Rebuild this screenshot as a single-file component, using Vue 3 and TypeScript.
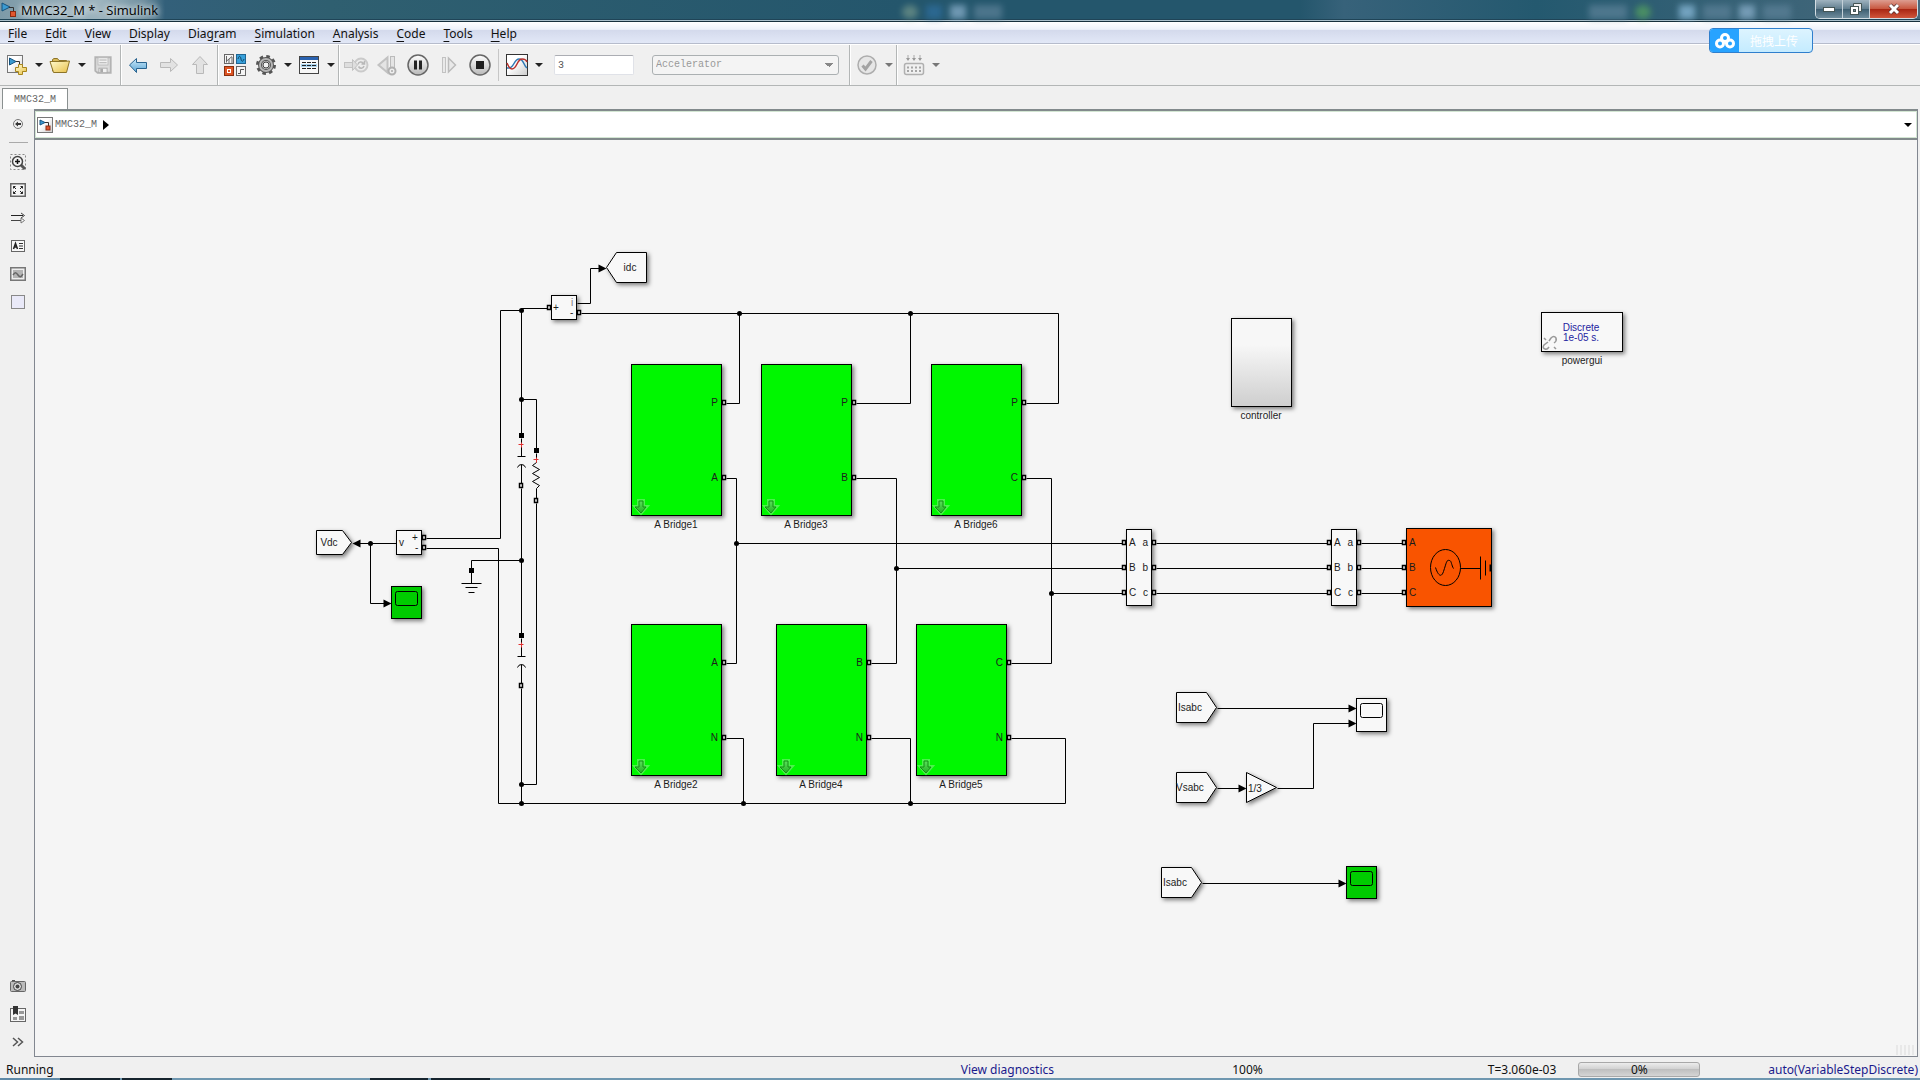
<script setup lang="ts">
interface MenuItem { pre: string; key: string; post: string }
interface Port { x: number; y: number }
interface Label { x: number; y: number; text: string; anchor?: 'start' | 'middle' | 'end' }
interface Bridge { x: number; y: number; name: string; top: string; bottom: string }
interface Tag { points: string; label: Label }
interface Scope { x: number; y: number; h: number; running: boolean }

const menus: MenuItem[] = [
  { pre: '', key: 'F', post: 'ile' },
  { pre: '', key: 'E', post: 'dit' },
  { pre: '', key: 'V', post: 'iew' },
  { pre: '', key: 'D', post: 'isplay' },
  { pre: 'Diag', key: 'r', post: 'am' },
  { pre: '', key: 'S', post: 'imulation' },
  { pre: '', key: 'A', post: 'nalysis' },
  { pre: '', key: 'C', post: 'ode' },
  { pre: '', key: 'T', post: 'ools' },
  { pre: '', key: 'H', post: 'elp' },
]

const palette = [
  { id: 'zoom', name: 'Zoom' },
  { id: 'fit', name: 'Fit to view' },
  { id: 'signals', name: 'Sample time' },
  { id: 'note', name: 'Annotation' },
  { id: 'image', name: 'Image' },
  { id: 'area', name: 'Area' },
]
const paletteBottom = [
  { id: 'camera', name: 'Screenshot' },
  { id: 'browser', name: 'Model browser' },
  { id: 'more', name: 'More' },
]

const bridges: Bridge[] = [
  { x: 631, y: 364, name: 'A Bridge1', top: 'P', bottom: 'A' },
  { x: 761, y: 364, name: 'A Bridge3', top: 'P', bottom: 'B' },
  { x: 931, y: 364, name: 'A Bridge6', top: 'P', bottom: 'C' },
  { x: 631, y: 624, name: 'A Bridge2', top: 'A', bottom: 'N' },
  { x: 776, y: 624, name: 'A Bridge4', top: 'B', bottom: 'N' },
  { x: 916, y: 624, name: 'A Bridge5', top: 'C', bottom: 'N' },
]

const wires: string[] = [
  'M426 538H500V310H521', 'M521 308H547', 'M521 308V433', 'M521 399H536V448',
  'M577 303H590V268H600', 'M581 313H1058V403H1026',
  'M739 313V403H726', 'M910 313V403H856',
  'M726 478H736V663H726', 'M856 478H896V663H871', 'M1026 478H1051V663H1011',
  'M736 543H1122', 'M896 568H1122', 'M1051 593H1122',
  'M1156 543H1327', 'M1156 568H1327', 'M1156 593H1327',
  'M1361 543H1402', 'M1361 568H1402', 'M1361 593H1402',
  'M426 548H498V803H1065V738H1011', 'M726 738H743V803', 'M871 738H910V803',
  'M521 488V633', 'M521 688V803', 'M536 503V784H521',
  'M521 560H471V583', 'M461 583H481', 'M465 587H477', 'M468 592H474',
  'M396 543H358', 'M370 543V603H384',
  'M1217 708H1349', 'M1217 788H1239', 'M1277 788H1313V723H1349', 'M1202 883H1339',
]

const dots: Port[] = [
  { x: 521, y: 310 }, { x: 521, y: 399 }, { x: 739, y: 313 }, { x: 910, y: 313 },
  { x: 736, y: 543 }, { x: 896, y: 568 }, { x: 1051, y: 593 }, { x: 370, y: 543 },
  { x: 521, y: 560 }, { x: 521, y: 784 }, { x: 521, y: 803 }, { x: 743, y: 803 }, { x: 910, y: 803 },
]

const arrows = [
  { x: 606, y: 268, left: false }, { x: 391, y: 603, left: false }, { x: 352, y: 543, left: true },
  { x: 1356, y: 708, left: false }, { x: 1356, y: 723, left: false },
  { x: 1246, y: 788, left: false }, { x: 1346, y: 883, left: false },
]

const tags: Tag[] = [
  { points: '606,267 616,252 646,252 646,282 616,282', label: { x: 630, y: 271, text: 'idc', anchor: 'middle' } },
  { points: '316,530 342,530 351,542 342,554 316,554', label: { x: 329, y: 546, text: 'Vdc', anchor: 'middle' } },
  { points: '1176,692 1206,692 1216,707 1206,722 1176,722', label: { x: 1178, y: 711, text: 'Isabc' } },
  { points: '1176,772 1206,772 1216,787 1206,802 1176,802', label: { x: 1176, y: 791, text: 'Vsabc' } },
  { points: '1161,867 1191,867 1201,882 1191,897 1161,897', label: { x: 1163, y: 886, text: 'Isabc' } },
]

const scopes: Scope[] = [
  { x: 391, y: 586, h: 32, running: true },
  { x: 1356, y: 698, h: 33, running: false },
  { x: 1346, y: 866, h: 32, running: true },
]

const phases = [{ y: 542, up: 'A', low: 'a' }, { y: 567, up: 'B', low: 'b' }, { y: 592, up: 'C', low: 'c' }]
const meters: number[] = [1126, 1331]
const capacitors: number[] = [435, 635]

const hollowPorts: Port[] = [
  { x: 549, y: 307 }, { x: 579, y: 312 }, { x: 424, y: 537 }, { x: 424, y: 547 },
  { x: 521, y: 485 }, { x: 521, y: 685 }, { x: 536, y: 500 },
  ...bridges.flatMap(b => [{ x: b.x + 93, y: b.y + 38 }, { x: b.x + 93, y: b.y + 113 }]),
  ...meters.flatMap(x => phases.flatMap(p => [{ x: x - 2, y: p.y }, { x: x + 28, y: p.y }])),
  ...phases.map(p => ({ x: 1404, y: p.y })),
]
const solidPorts: Port[] = [{ x: 521, y: 435 }, { x: 536, y: 450 }, { x: 521, y: 635 }, { x: 471, y: 570 }]
</script>

<template>
  <svg class="sprite" aria-hidden="true">
    <defs>
      <linearGradient id="gBlue" x1="0" y1="0" x2="0" y2="1"><stop offset="0" stop-color="#cdeafa" /><stop offset="1" stop-color="#5ba6d6" /></linearGradient>
      <linearGradient id="gGrey" x1="0" y1="0" x2="0" y2="1"><stop offset="0" stop-color="#ffffff" /><stop offset="1" stop-color="#b8b8b8" /></linearGradient>
      <linearGradient id="gPage" x1="0" y1="0" x2="1" y2="1"><stop offset="0.4" stop-color="#ffffff" /><stop offset="1" stop-color="#cccccc" /></linearGradient>
      <linearGradient id="gYellow" x1="0" y1="0" x2="1" y2="1"><stop offset="0" stop-color="#fffbd0" /><stop offset="1" stop-color="#e8c048" /></linearGradient>
      <linearGradient id="gCtl" x1="0" y1="0" x2="0" y2="1"><stop offset="0.3" stop-color="#f7f7f7" /><stop offset="1" stop-color="#cecece" /></linearGradient>
      <linearGradient id="gArrow" x1="0" y1="0" x2="0" y2="1"><stop offset="0" stop-color="#5be05b" /><stop offset="1" stop-color="#22b422" /></linearGradient>
    </defs>
    <symbol id="i-model" viewBox="0 0 16 16">
      <path d="M1 1L9 5L1 9Z" fill="#3b9bd2" stroke="#15527d" />
      <path d="M8 5.500H12.500V9" fill="none" stroke="#333" />
      <rect x="9.500" y="9.500" width="5" height="5" fill="#e0562f" stroke="#8b2a10" />
    </symbol>
    <symbol id="i-modelpage" viewBox="0 0 16 16">
      <rect x=".5" y=".5" width="15" height="15" fill="url(#gPage)" stroke="#777" />
      <path class="tri" d="M3 3L8 5.500L3 8Z" fill="#3b9bd2" stroke="#15527d" />
      <path d="M8 5.500H11.500V9" fill="none" stroke="#333" />
      <rect x="9" y="9" width="4" height="4" fill="#e0562f" stroke="#8b2a10" />
    </symbol>
    <symbol id="i-new" viewBox="0 0 22 22">
      <rect x="1.500" y="1.500" width="15" height="17" fill="url(#gPage)" stroke="#777" />
      <path d="M3.500 4L10 7.500L3.500 11Z" fill="#3b9bd2" stroke="#15527d" /><path d="M10 7.500H13.500V12" fill="none" stroke="#333" />
      <path d="M12.500 10.500H16.500V13.500H20.500V17.500H16.500V20.500H12.500V17.500H9.500V13.500H12.500Z" fill="url(#gYellow)" stroke="#a8861c" />
    </symbol>
    <symbol id="i-open" viewBox="0 0 22 22">
      <path d="M3.500 17V5.500L5 4.500H8.500L10 6.500H17.500V17Z" fill="#d8b958" stroke="#8d7428" />
      <path d="M1 7.500H14L20.500 7L17.500 18.500H4.500Z" fill="url(#gYellow)" stroke="#8d7428" />
    </symbol>
    <symbol id="i-save" viewBox="0 0 22 22">
      <path d="M2.500 2.500H19.500V19.500H5L2.500 17.500Z" fill="#dcdcdc" stroke="#b3b3b3" stroke-width="2" />
      <rect x="5.500" y="3" width="11" height="8" fill="#f1f1f1" stroke="#b9b9b9" /><path d="M7 5.500H15M7 8.500H15" stroke="#aaa" />
      <rect x="6.500" y="14.500" width="9" height="5" fill="#f1f1f1" stroke="#aaa" /><rect x="8" y="15" width="3" height="4" fill="#aaa" />
    </symbol>
    <symbol id="i-left" viewBox="0 0 22 22"><path d="M2.500 11L9.500 4.500V8.500H19.500V14.500H9.500V18.500Z" fill="url(#gBlue)" stroke="#29638f" stroke-linejoin="round" /></symbol>
    <symbol id="i-right" viewBox="0 0 22 22"><path d="M19.500 11L12.500 4.500V8.500H2.500V13.500H12.500V17.500Z" fill="#e2e2e2" stroke="#b9b9b9" stroke-linejoin="round" /></symbol>
    <symbol id="i-up" viewBox="0 0 22 22"><path d="M11 2.500L18.500 10.500H14.500V19.500H7.500V10.500H3.500Z" fill="#e2e2e2" stroke="#b9b9b9" stroke-linejoin="round" /></symbol>
    <symbol id="i-lib" viewBox="0 0 22 22">
      <rect x=".5" y=".5" width="9" height="9" fill="#f4f4f4" stroke="#666" /><path d="M2.500 2V8.500M2 7.500L8 2.500M5 5V9M8 3V9" stroke="#666" fill="none" />
      <rect x="12.500" y=".5" width="9" height="9" fill="#38a0da" stroke="#1f6592" /><path d="M14 5C15 1 16.500 2 17 5S19 8 20 5" stroke="#114766" fill="none" />
      <rect x=".5" y="12.500" width="9" height="9" fill="#dd5423" stroke="#8a2f0e" /><rect x="3.500" y="15.500" width="3" height="3" fill="none" stroke="#fff" />
      <rect x="12.500" y="12.500" width="9" height="9" fill="#f4f4f4" stroke="#666" /><path d="M14 19.500H16.500V15.500H20" stroke="#555" fill="none" />
    </symbol>
    <symbol id="i-gear" viewBox="0 0 22 22">
      <circle cx="11" cy="11" r="8.500" fill="none" stroke="#555" stroke-width="3" stroke-dasharray="3.500 3.180" />
      <circle cx="11" cy="11" r="6" fill="#c9c9c9" stroke="#555" stroke-width="4" /><circle cx="11" cy="11" r="6" fill="none" stroke="#b5b5b5" stroke-width="2" />
      <circle cx="11" cy="11" r="3" fill="#f2f2f2" stroke="#444" />
    </symbol>
    <symbol id="i-explorer" viewBox="0 0 22 22">
      <rect x="1.500" y="2.500" width="19" height="17" fill="#f7f7f7" stroke="#444" /><rect x="2" y="3" width="18" height="3" fill="#2a62b0" />
      <rect x="3" y="10" width="16" height="3" fill="#a8d4f0" />
      <path d="M4 8.500H8M9 8.500H13M14 8.500H18M4 11.500H8M9 11.500H13M14 11.500H18M4 14.500H8M9 14.500H13M14 14.500H18" stroke="#222" />
    </symbol>
    <symbol id="i-update" viewBox="0 0 26 22">
      <rect x="1.500" y="8.500" width="8" height="5" fill="#dedede" stroke="#c2c2c2" /><circle cx="18" cy="11" r="6.500" fill="#ececec" stroke="#cacaca" stroke-width="2" />
      <path d="M9.500 5.500L14.500 11L9.500 16.500Z" fill="#dedede" stroke="#c2c2c2" />
      <path d="M15 10.500C15.500 7.500 19 7 20.500 9.500M21.500 7V10H18.500M21 12C20 15 17 15 15.500 12.500" fill="none" stroke="#b8b8b8" stroke-width="1.500" />
    </symbol>
    <symbol id="i-back" viewBox="0 0 22 22">
      <path d="M11.500 3.500V18.500L2.500 11Z" fill="#e4e4e4" stroke="#c2c2c2" stroke-width="2" /><rect x="14.500" y="2.500" width="4" height="12" fill="#e4e4e4" stroke="#bbb" />
      <circle cx="16" cy="17" r="3.500" fill="#eee" stroke="#b0b0b0" stroke-width="2" /><circle cx="16" cy="17" r="1" fill="#aaa" />
    </symbol>
    <symbol id="i-pause" viewBox="0 0 22 22"><circle cx="11" cy="11" r="10" fill="url(#gGrey)" stroke="#666" stroke-width="1.500" /><path d="M8.500 6.500V15.500M13.500 6.500V15.500" stroke="#222" stroke-width="3" /></symbol>
    <symbol id="i-step" viewBox="0 0 22 22"><rect x="4.500" y="3.500" width="3" height="15" fill="#e9e9e9" stroke="#c2c2c2" /><path d="M10.500 4V18L17.500 11Z" fill="#e9e9e9" stroke="#bbb" stroke-width="1.500" /></symbol>
    <symbol id="i-stop" viewBox="0 0 22 22"><circle cx="11" cy="11" r="10" fill="url(#gGrey)" stroke="#666" stroke-width="1.500" /><rect x="7" y="7" width="8" height="8" fill="#1e1e1e" /></symbol>
    <symbol id="i-scope" viewBox="0 0 22 22">
      <rect x=".5" y=".5" width="21" height="21" fill="url(#gPage)" stroke="#333" />
      <path d="M1 14H3C8 14 8 5 13 5C18 5 17 11 21 14" fill="none" stroke="#2d77b4" stroke-width="1.500" /><path d="M1 9C3 14 4 15 6 15C11 15 11 5 16 5C18 5 20 5 21 8" fill="none" stroke="#b8302c" stroke-width="1.500" />
    </symbol>
    <symbol id="i-check" viewBox="0 0 22 22"><circle cx="11" cy="11" r="9" fill="#e6e6e6" stroke="#adadad" stroke-width="1.500" /><path d="M6.500 11.500L9.500 15L15.500 7" fill="none" stroke="#a3a3a3" stroke-width="3" /></symbol>
    <symbol id="i-build" viewBox="0 0 22 22">
      <path d="M5 1V6M11 1V6M17 1V6" stroke="#aaa" /><path d="M3 4H7L5 7ZM9 4H13L11 7ZM15 4H19L17 7Z" fill="#999" />
      <rect x="1.500" y="9.500" width="19" height="11" rx="2" fill="#f0f0f0" stroke="#b0b0b0" stroke-width="1.500" /><path d="M4 13.500H18M4 17H18" stroke="#a5a5a5" stroke-width="2" stroke-dasharray="2 2" />
    </symbol>
    <symbol id="i-hide" viewBox="0 0 18 18"><circle cx="9" cy="9" r="4.500" fill="none" stroke="#777" /><path d="M6 9L9 6.500V8H12V10H9V11.500Z" fill="#333" /></symbol>
    <symbol id="i-zoom" viewBox="0 0 18 18">
      <rect x="1.500" y="1.500" width="15" height="15" fill="none" stroke="#888" stroke-dasharray="2 2" />
      <path d="M12 12L16 16" stroke="#555" stroke-width="3" /><circle cx="8.500" cy="8.500" r="5" fill="#f4f4f4" stroke="#444" stroke-width="1.500" /><path d="M6 8.500H11M8.500 6V11" stroke="#111" stroke-width="1.500" />
    </symbol>
    <symbol id="i-fit" viewBox="0 0 18 18">
      <rect x="1.750" y="2.750" width="14.500" height="12.500" fill="#f5f5f5" stroke="#666" stroke-width="1.500" />
      <path d="M4.500 7.500V5.500H6.500M4.500 5.500L7 8M11.500 5.500H13.500V7.500M13.500 5.500L11 8M4.500 10.500V12.500H6.500M4.500 12.500L7 10M13.500 10.500V12.500H11.500M13.500 12.500L11 10" fill="none" stroke="#222" />
    </symbol>
    <symbol id="i-signals" viewBox="0 0 18 18"><path d="M2 6.500H14" stroke="#222" /><path d="M12 4L15.500 6.500L12 9M2 11.500H12" fill="none" stroke="#444" /><path d="M12 9L15.500 11.500L12 14Z" fill="#fff" stroke="#777" /></symbol>
    <symbol id="i-note" viewBox="0 0 18 18"><rect x="2.500" y="3.500" width="13" height="11" fill="#f8f8f8" stroke="#666" /><path d="M4.500 12L6.500 6.500L8.500 12M5 10H8" fill="none" stroke="#222" stroke-width="1.500" /><path d="M10 6.500H14M10 9H14M10 11.500H14" stroke="#333" /></symbol>
    <symbol id="i-image" viewBox="0 0 18 18"><rect x="1.750" y="2.750" width="14.500" height="12.500" fill="#eee" stroke="#777" stroke-width="1.500" /><rect x="4" y="5" width="10" height="8" fill="#b4b4b4" /><path d="M4 10C6 7 7 7 9 10S12 12 14 9" fill="none" stroke="#666" stroke-width="1.500" /></symbol>
    <symbol id="i-area" viewBox="0 0 18 18"><rect x="2.500" y="2.500" width="13" height="13" fill="#e9e9f8" stroke="#888" /></symbol>
    <symbol id="i-camera" viewBox="0 0 18 18"><path d="M3 3.500H6" stroke="#555" /><rect x="1.500" y="4.500" width="15" height="10" rx="1" fill="#bbb" stroke="#666" /><circle cx="8.500" cy="9.500" r="4" fill="#ddd" stroke="#444" /><circle cx="8.500" cy="9.500" r="2" fill="#444" /></symbol>
    <symbol id="i-browser" viewBox="0 0 18 18"><rect x="1.500" y="3.500" width="15" height="13" fill="#f5f5f5" stroke="#666" /><path d="M10 6H15V9H10ZM10 11H15V15H10ZM4 12H8V15H4Z" fill="#999" /><path d="M4 1H9V10L6.500 8.500L4 10Z" fill="#333" /></symbol>
    <symbol id="i-more" viewBox="0 0 18 18"><path d="M4 5L8.500 9L4 13M9 5L13.500 9L9 13" fill="none" stroke="#555" stroke-width="1.500" /></symbol>
  </svg>

  <div class="window">
    <header class="titlebar">
      <svg class="logo" width="16" height="18"><use href="#i-model" width="16" height="18" /></svg>
      <h1>MMC32_M * - Simulink</h1>
      <span class="ghosts ghosts-mid" aria-hidden="true"><i class="g-orb"></i><i class="g-blue"></i><i class="g-tile"></i><i class="g-text"></i></span>
      <span class="ghosts ghosts-end" aria-hidden="true"><i class="g-text wide"></i><i class="g-green"></i><i class="g-shirt"></i><i class="g-text"></i><i class="g-tile"></i><i class="g-text"></i></span>
      <div class="winbtns">
        <button type="button" class="min" aria-label="Minimize"><svg width="14" height="10"><rect x="1.500" y="3.500" width="11" height="4" fill="#fff" stroke="#455" /></svg></button>
        <button type="button" class="max" aria-label="Restore"><svg width="14" height="14"><path d="M4.500 1.500H12.500V9.500H4.500Z" fill="#eee" stroke="#455" /><rect x="1.500" y="4.500" width="8" height="8" fill="#fff" stroke="#455" /><rect x="4.500" y="7.500" width="2" height="2" fill="#789" stroke="#455" /></svg></button>
        <button type="button" class="close" aria-label="Close"><svg width="14" height="12"><path d="M3 2L11 10M11 2L3 10" stroke="#533" stroke-width="4.500" /><path d="M3 2L11 10M11 2L3 10" stroke="#fff" stroke-width="3" /></svg></button>
      </div>
    </header>

    <nav class="menubar" aria-label="Main menu">
      <button v-for="m in menus" :key="m.pre + m.key + m.post" type="button">{{ m.pre }}<u>{{ m.key }}</u>{{ m.post }}</button>
    </nav>

    <div class="toolbar" role="toolbar" aria-label="Model tools">
      <div class="group">
        <button type="button" class="icon" aria-label="New"><svg width="22" height="22"><use href="#i-new" /></svg></button>
        <button type="button" class="caret" aria-label="New options"></button>
        <button type="button" class="icon" aria-label="Open"><svg width="22" height="22"><use href="#i-open" /></svg></button>
        <button type="button" class="caret" aria-label="Open options"></button>
        <button type="button" class="icon" aria-label="Save"><svg width="20" height="20"><use href="#i-save" /></svg></button>
      </div>
      <div class="group">
        <button type="button" class="icon" aria-label="Back"><svg width="22" height="22"><use href="#i-left" /></svg></button>
        <button type="button" class="icon" aria-label="Forward"><svg width="22" height="22"><use href="#i-right" /></svg></button>
        <button type="button" class="icon" aria-label="Up"><svg width="22" height="22"><use href="#i-up" /></svg></button>
      </div>
      <div class="group flush">
        <button type="button" class="icon" aria-label="Library"><svg width="22" height="22"><use href="#i-lib" /></svg></button>
        <button type="button" class="icon" aria-label="Configuration"><svg width="22" height="22"><use href="#i-gear" /></svg></button>
        <button type="button" class="caret" aria-label="Configuration options"></button>
        <button type="button" class="icon" aria-label="Explorer"><svg width="22" height="22"><use href="#i-explorer" /></svg></button>
        <button type="button" class="caret" aria-label="Explorer options"></button>
      </div>
      <div class="group run">
        <button type="button" class="icon" aria-label="Update"><svg width="26" height="22"><use href="#i-update" /></svg></button>
        <button type="button" class="icon" aria-label="Step back"><svg width="22" height="22"><use href="#i-back" /></svg></button>
        <button type="button" class="icon" aria-label="Pause"><svg width="22" height="22"><use href="#i-pause" /></svg></button>
        <button type="button" class="icon" aria-label="Step forward"><svg width="22" height="22"><use href="#i-step" /></svg></button>
        <button type="button" class="icon" aria-label="Stop"><svg width="22" height="22"><use href="#i-stop" /></svg></button>
        <span class="rule"></span>
        <button type="button" class="icon" aria-label="Data inspector"><svg width="22" height="22"><use href="#i-scope" /></svg></button>
        <button type="button" class="caret" aria-label="Inspector options"></button>
        <input class="stoptime" type="text" value="3" aria-label="Stop time">
        <select class="mode" aria-label="Simulation mode" disabled><option>Accelerator</option></select>
      </div>
      <div class="group flush">
        <button type="button" class="icon" aria-label="Advisor"><svg width="22" height="22"><use href="#i-check" /></svg></button>
        <button type="button" class="caret dim" aria-label="Advisor options"></button>
      </div>
      <div class="group last">
        <button type="button" class="icon" aria-label="Build"><svg width="22" height="22"><use href="#i-build" /></svg></button>
        <button type="button" class="caret dim" aria-label="Build options"></button>
      </div>
    </div>

    <div class="tabs"><button type="button" class="tab">MMC32_M</button></div>

    <div class="body">
      <aside class="palette">
        <button type="button" aria-label="Hide"><svg width="18" height="18"><use href="#i-hide" /></svg></button>
        <hr>
        <button v-for="p in palette" :key="p.id" type="button" :aria-label="p.name"><svg width="18" height="18"><use :href="'#i-' + p.id" /></svg></button>
        <span class="grow"></span>
        <button v-for="p in paletteBottom" :key="p.id" type="button" :aria-label="p.name"><svg width="18" height="18"><use :href="'#i-' + p.id" /></svg></button>
      </aside>

      <main class="editor">
        <div class="crumbs">
          <svg width="16" height="16"><use href="#i-modelpage" /></svg>
          <a href="#">MMC32_M</a>
          <svg width="6" height="10"><path d="M0 0L6 5L0 10Z" fill="#000" /></svg>
          <button type="button" class="caret history" aria-label="History"></button>
        </div>

        <div class="canvas">
          <svg class="diagram" role="img" aria-label="MMC32_M block diagram">
            <g transform="translate(-35 -140)">
              <g class="blocks" transform="translate(.5 .5)">
                <rect x="551" y="295" width="25" height="24" />
                <rect x="396" y="530" width="25" height="24" />
                <rect v-for="b in bridges" :key="b.name" class="bridge" :x="b.x" :y="b.y" width="90" height="151" />
                <rect v-for="x in meters" :key="x" :x="x" y="529" width="25" height="76" />
                <rect class="source" x="1406" y="528" width="85" height="78" />
                <rect class="controller" x="1231" y="318" width="60" height="88" />
                <rect x="1541" y="312" width="81" height="39" />
                <polygon v-for="t in tags" :key="t.points" :points="t.points" />
                <polygon points="1246,772 1276,787 1246,802" />
                <rect v-for="s in scopes" :key="s.x" :class="{ on: s.running }" :x="s.x" :y="s.y" width="30" :height="s.h" />
              </g>

              <g class="wires" transform="translate(.5 .5)">
                <path v-for="w in wires" :key="w" :d="w" />
                <g v-for="y in capacitors" :key="y" :transform="`translate(521 ${y})`">
                  <path d="M0 3V21M-4 21H4M-4 32Q-3 29 0 29Q3 29 4 32M0 29V48" />
                  <path class="plus" d="M-3 9H2M0 7V12" />
                </g>
                <path d="M536 453V462L532 465L539 469L532 473L539 477L532 481L539 485L536 488V498" />
                <path class="plus" d="M533 459H538M536 457V462" />
                <rect v-for="s in scopes" :key="s.x" :x="s.x + 4" :y="s.y + 5" width="22" height="14" rx="2" />
                <ellipse cx="1445" cy="567" rx="15" ry="18" />
                <path d="M1435 567C1438 576 1441 577 1443 571C1446 562 1446 559 1449 560C1451 560 1451 565 1453 568M1460 568H1480M1480 556V579M1485 560V575" />
                <path d="M1490 564V571" stroke-width="2" />
              </g>

              <g transform="translate(.5 .5)">
                <circle v-for="d in dots" :key="`${d.x}-${d.y}`" :cx="d.x" :cy="d.y" r="2.500" />
                <path v-for="a in arrows" :key="`${a.x}-${a.y}`" :d="a.left ? `M${a.x} ${a.y}l8 -4v8z` : `M${a.x} ${a.y}l-8 -4v8z`" />
                <rect v-for="p in solidPorts" :key="`${p.x}-${p.y}`" :x="p.x - 2.5" :y="p.y - 2.5" width="5" height="5" />
                <rect v-for="p in hollowPorts" :key="`${p.x}-${p.y}`" class="port" :x="p.x - 2" :y="p.y - 2" width="3" height="4" />
              </g>

              <g v-for="b in bridges" :key="b.name" :transform="`translate(${b.x} ${b.y})`">
                <g class="link"><path class="halo" d="M7 136H13V142H17L10 150L3 142H7Z" /><path d="M8 137H12V143H15L10 149L4 143H8Z" /></g>
                <text x="87" y="42" text-anchor="end">{{ b.top }}</text>
                <text x="87" y="117" text-anchor="end">{{ b.bottom }}</text>
                <text x="45" y="164" text-anchor="middle">{{ b.name }}</text>
              </g>

              <g v-for="x in meters" :key="x">
                <template v-for="p in phases" :key="p.up">
                  <text :x="x + 3" :y="p.y + 4">{{ p.up }}</text>
                  <text :x="x + 22" :y="p.y + 4" text-anchor="end">{{ p.low }}</text>
                </template>
              </g>
              <text v-for="p in phases" :key="p.up" x="1409" :y="p.y + 4">{{ p.up }}</text>
              <text v-for="t in tags" :key="t.points" :x="t.label.x" :y="t.label.y" :text-anchor="t.label.anchor">{{ t.label.text }}</text>

              <text x="1248" y="792">1/3</text>
              <text x="399" y="546">v</text>
              <text x="412" y="541">+</text>
              <text x="415" y="551">-</text>
              <text x="553" y="311">+</text>
              <text x="571" y="306" class="faint">i</text>
              <text x="570" y="316">-</text>
              <text x="1261" y="419" text-anchor="middle">controller</text>
              <text x="1581" y="331" text-anchor="middle" class="blue">Discrete</text>
              <text x="1581" y="341" text-anchor="middle" class="blue">1e-05 s.</text>
              <text x="1582" y="364" text-anchor="middle">powergui</text>
              <path class="broken" d="M1549 341L1551 338Q1554 335 1556 338Q1557 341 1554 343M1548 342L1544 345Q1542 348 1545 349Q1547 350 1549 347M1544 338L1546 340M1554 347L1556 349" />
            </g>
          </svg>
        </div>
      </main>
    </div>

    <footer class="status">
      <span>Running</span>
      <a href="#">View diagnostics</a>
      <span>100%</span>
      <div class="right">
        <span>T=3.060e-03</span>
        <div class="progress" role="progressbar" aria-valuenow="0" aria-label="Progress">0%</div>
        <a href="#">auto(VariableStepDiscrete)</a>
      </div>
    </footer>
    <div class="edge"></div>

    <button type="button" class="upload">
      <span class="cloud"><svg width="20" height="16" fill="none" stroke="#fff" stroke-width="3"><circle cx="10" cy="5" r="3.500" /><circle cx="5" cy="10.500" r="3.500" /><circle cx="15" cy="10.500" r="3.500" /></svg></span>
      <span class="upload-text">拖拽上传</span>
    </button>
  </div>
</template>

<style>
body { background: #f0f0f0; }
</style>

<style scoped>
.sprite { position: absolute; width: 0; height: 0; }
.window {
  position: relative; display: flex; flex-direction: column; min-height: 100vh;
  background: #f0f0f0; color: #111; font: 12px/16px "Noto Sans", "Open Sans", sans-serif;
}
button { border: 0; padding: 0; margin: 0; background: none; font: inherit; color: inherit; }
a { text-decoration: none; color: inherit; }

.titlebar {
  display: flex; align-items: center; position: relative; height: 20px; padding-left: 1px;
  background: linear-gradient(90deg, #7d9aa8 0, #9db4be 100px, #6e8f9f 145px, #33607a 165px, #2f5f70 330px, #24566c 900px, #24566c 1300px, #37627a 70%, #24596f 80%, #47697c 100%);
  border-bottom: 1px solid #a9bfca; box-shadow: inset 0 -1px 0 #1f4457;
}
.titlebar h1 { margin: 0 0 0 4px; font: 13px/18px "Open Sans", "Noto Sans", sans-serif; color: #000; text-shadow: 0 0 6px #fff, 0 0 8px #fff; }
.ghosts { position: absolute; top: 5px; display: flex; gap: 8px; filter: blur(3px); opacity: .7; }
.ghosts i { height: 14px; width: 16px; }
.ghosts-mid { left: 47%; }
.ghosts-end { right: 129px; }
.g-orb { background: #73968a; border-radius: 50%; }
.g-blue { background: #2f6fa0; }
.g-tile { background: #8fb4d0; }
.g-shirt { background: #8fc0e0; margin-left: 20px; }
.g-green { background: #56a35e; border-radius: 50%; }
.ghosts .g-text { width: 28px; background: #5d8299; }
.ghosts .wide { width: 38px; }
.winbtns { display: flex; height: 18px; margin: 0 2px 2px auto; border: 1px solid #d3dde3; border-top: 0; border-radius: 0 0 5px 5px; overflow: hidden; }
.winbtns button { display: flex; align-items: center; justify-content: center; width: 27px; border-right: 1px solid #c3d0d8; background: linear-gradient(#9fb3bf, #627f90 48%, #3e5f72 52%, #6f8c9c); }
.winbtns .close { width: 47px; border-right: 0; background: linear-gradient(#dd9d90, #c85840 48%, #a92713 52%, #d0553a); }

.menubar { display: flex; align-items: center; gap: 18px; height: 23px; padding: 2px 8px 0; border-top: 1px solid #17303c; background: linear-gradient(#fff, #eef2fa 35%, #d4daec 40%, #e2e8f7); border-bottom: 1px solid #b6bccc; box-sizing: border-box; }
.menubar u { text-underline-offset: 3px; }

.toolbar { display: flex; height: 42px; box-sizing: border-box; border-bottom: 1px solid #b3b6b6; border-top: 1px solid #fff; }
.group { display: flex; align-items: center; padding: 0 3px; border-right: 1px solid #b3b6b6; box-shadow: 1px 0 0 #fff; }
.group.flush { padding-right: 0; }
.group.run { padding-right: 10px; }
.group.last { border-right: 0; box-shadow: none; }
.icon { display: flex; align-items: center; justify-content: center; width: 28px; height: 32px; }
.icon + .icon { margin-left: 3px; }
.caret { display: flex; align-items: center; justify-content: center; width: 15px; height: 32px; color: #222; }
.caret::after { content: ""; border: 4px solid transparent; border-top: 4px solid; border-bottom: 0; }
.caret.dim { color: #777; }
.rule { width: 1px; height: 32px; margin: 0 4px; background: #c6c6c6; }
.stoptime { width: 80px; height: 20px; margin: 0 0 0 8px; padding: 0 3px; box-sizing: border-box; border: 1px solid #e0e2e8; border-top-color: #abadb3; border-radius: 2px; background: #fff; color: #555; font: 10px/16px "Liberation Mono", monospace; }
.mode {
  appearance: none; width: 187px; height: 20px; margin: 0 0 0 18px; padding: 0 3px; box-sizing: border-box;
  border: 1px solid #abb0b2; border-radius: 3px; color: #999; opacity: 1; font: 10px/16px "Liberation Mono", monospace;
  background: linear-gradient(45deg, transparent 50%, #888 50%) right 9px top 7px / 4px 4px no-repeat, linear-gradient(-45deg, transparent 50%, #888 50%) right 5px top 7px / 4px 4px no-repeat, #f4f4f4;
}

.tabs { display: flex; align-items: flex-end; height: 23px; padding-left: 2px; }
.tab { height: 21px; padding: 2px 11px 0; background: #fff; border: 1px solid #8a9090; border-bottom: 0; color: #666; font: 10px/16px "Liberation Mono", monospace; }

.body { display: flex; flex: 1; padding-right: 2px; }
.palette { display: flex; flex-direction: column; align-items: center; width: 32px; padding: 1px 0 1px 2px; }
.palette button { display: flex; align-items: center; justify-content: center; width: 28px; height: 28px; flex: none; }
.palette hr { width: 19px; height: 1px; margin: 4px 0 5px; border: 0; background: #aaa; }
.grow { flex: 1; }
.editor { display: flex; flex: 1; flex-direction: column; min-width: 0; border: 1px solid #828790; border-top: 0; }
.crumbs { display: flex; align-items: center; height: 31px; box-sizing: border-box; padding: 0 2px; background: #fff; border-top: 2px solid #828a8c; border-bottom: 2px solid #828a8c; box-shadow: inset 0 0 0 1px #d3e6d3; color: #666; font: 10px/16px "Liberation Mono", monospace; }
.crumbs a { margin: 0 6px 0 2px; }
.crumbs svg { flex: none; }
.history { margin-left: auto; color: #000; }

.canvas { position: relative; flex: 1; min-height: 800px; background: #f5f5f5; overflow: hidden; }
.canvas::after { content: ""; position: absolute; right: 1px; bottom: 1px; width: 20px; height: 10px; background: repeating-linear-gradient(90deg, #e8e8e8 0 2px, transparent 2px 4px); }
.diagram { position: absolute; inset: 0; width: 100%; height: 100%; font: 10px "Liberation Sans", Arial, sans-serif; fill: #000; }
.diagram text { fill: #1c1c1c; }
.diagram .bridge { fill: #00f700; }
.blocks > * { fill: #f8f8f8; stroke: #000; filter: drop-shadow(2px 2px 2px rgba(0, 0, 0, .5)); }
.blocks .source { fill: #f95400; }
.blocks .controller { fill: url(#gCtl); }
.blocks .on { fill: #00cb00; }
.wires { fill: none; stroke: #000; }
.wires .plus { stroke: #e03030; }
.port { fill: #fff; stroke: #000; stroke-width: 1.500; }
.link path { fill: url(#gArrow); stroke: #158c15; }
.link .halo { fill: #7df07d; stroke: #7df07d; opacity: .6; stroke-width: 2; }
.diagram .faint { fill: #777; }
.diagram .blue { fill: #2323a0; }
.broken { fill: none; stroke: #999; stroke-width: 1.500; }

.status { display: grid; grid-template-columns: 953fr 271fr auto 654fr; align-items: center; height: 21px; padding: 4px 2px 0 6px; box-sizing: border-box; }
.status a { color: #1a1a8c; }
.right { display: flex; align-items: center; justify-content: flex-end; }
.progress { width: 120px; height: 13px; margin: 0 68px 0 22px; border: 1px solid #a8a8a8; border-radius: 3px; background: linear-gradient(#ececec, #d2d2d2 45%, #bfbfbf 50%, #d5d5d5); text-align: center; line-height: 13px; }
.edge { height: 2px; background: linear-gradient(90deg, #5f8aa8 0 60px, #16242e 60px 120px, #6f97b0 120px 122px, #16242e 122px 172px, #6f97b0 172px 370px, #16242e 370px 428px, #6f97b0 428px 431px, #16242e 431px 490px, #6f97b0 490px); }

.upload { position: absolute; top: 28px; right: 107px; display: flex; width: 104px; height: 25px; border: 1px solid #2f7fcd; border-radius: 4px; overflow: hidden; background: linear-gradient(#ddf4ff, #c4ebff); }
.cloud { display: flex; align-items: center; justify-content: center; width: 29px; height: 100%; background: #27a3ff; }
.upload-text { margin-left: 11px; color: #fff; font: 12px/23px "Noto Sans CJK SC", sans-serif; }
</style>
